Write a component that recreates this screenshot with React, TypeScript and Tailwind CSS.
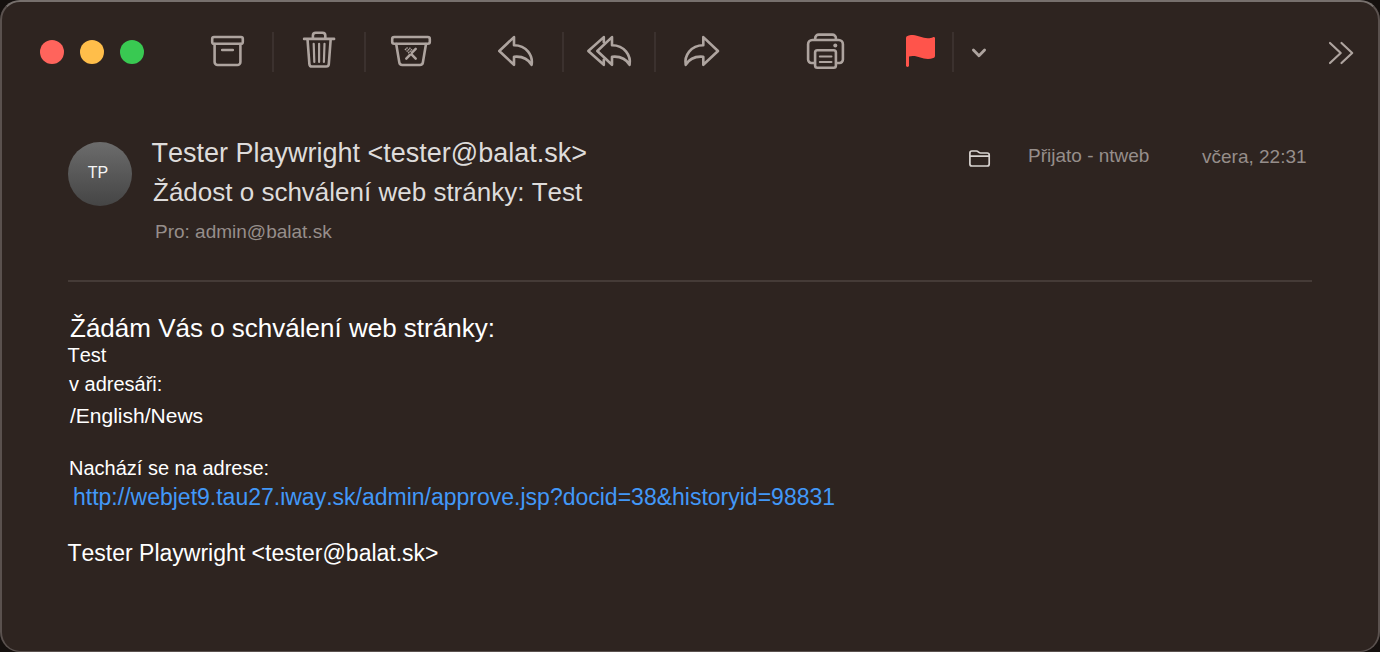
import type { ReactNode } from "react";

type IconProps = { box: string; className: string; children: ReactNode; width?: number };

function Icon({ box, className, children, width = 2.6 }: IconProps) {
  return (
    <svg
      viewBox={box}
      className={`shrink-0 ${className}`}
      fill="none"
      stroke="currentColor"
      strokeWidth={width}
      strokeLinecap="round"
      strokeLinejoin="round"
    >
      {children}
    </svg>
  );
}

function Separator() {
  return <div className="h-10 w-0.5 shrink-0 bg-[#3b312e]" />;
}

function Toolbar() {
  return (
    <header className="flex h-[100px] items-center pl-[38px] text-[#aea49f]">
      <div className="flex gap-4">
        <span className="size-6 rounded-full bg-[#ff645c]" />
        <span className="size-6 rounded-full bg-[#ffbe4a]" />
        <span className="size-6 rounded-full bg-[#39c952]" />
      </div>

      <div className="ml-16 flex items-center">
        <Icon box="208 32 40 40" className="h-10 w-10">
          <rect x="212.2" y="37" width="30.6" height="6.8" rx="1.8" />
          <path d="M214.6 44v18a3 3 0 0 0 3 3h19.8a3 3 0 0 0 3-3V44M222.2 50h10.6" />
        </Icon>
        <div className="ml-6"><Separator /></div>
        <Icon box="299 30 40 40" className="ml-[25px] h-10 w-10 -translate-y-0.5">
          <path d="M304.1 38.9h30M312.9 38.5v-3a2.8 2.8 0 0 1 2.8-2.8h6.8a2.8 2.8 0 0 1 2.8 2.8v3M307.5 39.2l1.9 24.9a2.6 2.6 0 0 0 2.6 2.4h14.2a2.6 2.6 0 0 0 2.6-2.4l1.9-24.9" />
          <path strokeWidth="2.2" d="M313.7 43.8l.6 18.2M319.1 43.8v18.2M324.5 43.8l-.6 18.2" />
        </Icon>
        <div className="ml-[25px]"><Separator /></div>
        <Icon box="388 32 46 40" className="ml-[22px] h-10 w-[46px]">
          <rect x="392.2" y="37" width="37.6" height="6.8" rx="2" />
          <path d="M396.2 44l3.1 18.4a3 3 0 0 0 3 2.6h17.6a3 3 0 0 0 3-2.6L426 44" />
          <path strokeWidth="2.5" d="M415.7 48.9l-3.7 3.8M409.7 55.2l-3.4 3.5M411.8 54.700l3.900 4" />
          <path strokeWidth="1.5" strokeDasharray="1.400 .9" strokeLinecap="butt" d="M405 48.900l6.400 6.400M406.500 47.600l6 6M409.400 47.700l2.600 2.600" />
        </Icon>
      </div>

      <div className="ml-[60px] flex items-center">
        <Icon box="494 32 44 40" className="h-10 w-11">
          <path d="M514 37.1L499.3 51 514 64.8v-8c8-.8 13.6 1.4 17.600 8 1.600-9-5-19.600-17.600-19.600z" />
        </Icon>
        <div className="ml-6"><Separator /></div>
        <Icon box="585 32 48 40" className="ml-[21px] h-10 w-12">
          <path d="M612 37.1L597.3 51 612 64.8v-8c8-.8 13.6 1.4 17.600 8 1.600-9-5-19.600-17.600-19.600z" />
          <path d="M603.8 42.2v-5.1L588.3 51l15.5 13.8v-5.1" />
        </Icon>
        <div className="ml-[21px]"><Separator /></div>
        <Icon box="680 32 44 40" className="ml-6 h-10 w-11">
          <path d="M703.3 37.1L718 51l-14.7 13.8v-8c-8-.8-13.600 1.400-17.600 8-1.600-9 5-19.600 17.600-19.600z" />
        </Icon>
      </div>

      <Icon box="804 30 44 42" className="ml-20 h-[42px] w-11 -translate-y-px">
        <path d="M814.5 63h-3a3.400 3.400 0 0 1-3.400-3.400V44.200a4.200 4.200 0 0 1 4.200-4.200h26.400a4.200 4.200 0 0 1 4.200 4.200v15.400a3.400 3.400 0 0 1-3.400 3.400h-3" />
        <path d="M815.2 39.6v-1.4a3.6 3.6 0 0 1 3.6-3.6h13.5a3.6 3.6 0 0 1 3.6 3.6v1.4" />
        <rect x="815.1" y="50.2" width="20.8" height="17.6" rx="2.2" />
        <path strokeWidth="2" d="M819.8 56.6h11.7M819.8 62h11.7" />
        <circle cx="835.3" cy="45.5" r="2" fill="currentColor" stroke="none" />
      </Icon>

      <div className="ml-[54px] flex items-center">
        <svg viewBox="902 32 38 40" className="h-10 w-[38px] shrink-0 text-[#ff544b]" fill="currentColor">
          <path d="M906 38.2c0-1.2.5-1.9 1.5-2.3 2-.8 3.4-1 5.5-.9 5.500.3 9.500 3.200 14.700 3.200 2.300 0 3.800-.4 5.300-1 1.200-.5 2 .1 2 1.300v17.300c0 1.100-.6 1.900-1.700 2.300-1.700.6-3.400.9-5.400.9-5.700 0-9.500-2.900-15.100-2.900-1.500 0-2.700.2-3.800.5v9c0 .9-.6 1.400-1.500 1.400s-1.500-.5-1.500-1.400z" />
        </svg>
        <div className="ml-3"><Separator /></div>
        <Icon box="969 42 20 20" className="ml-[15px] size-5" width={2.8}>
          <path d="M973.4 50l5.600 5.700 5.600-5.700" />
        </Icon>
      </div>

      <Icon box="1326 40 30 26" className="ml-[337px] h-[26px] w-[30px] translate-y-px" width={2.2}>
        <path d="M1330 43l10.700 10-10.700 10M1341.500 43l10.700 10-10.700 10" />
      </Icon>
    </header>
  );
}

function MessageHeader() {
  return (
    <section className="mx-[66px] flex h-[180px] border-b-2 border-[#453b37] pt-9">
      <div className="mt-1 flex size-16 shrink-0 justify-center rounded-full bg-linear-to-b from-[#6c6c6c] to-[#454545] pt-5 text-[16px] leading-[22px] text-[#f5f5f5]">
        <span className="-ml-1">TP</span>
      </div>
      <div className="ml-5 w-[816px] shrink-0 text-[#dedcdb]">
        <h1 className="-ml-[0.5px] text-[27px] leading-[30px]">Tester Playwright &lt;tester@balat.sk&gt;</h1>
        <h2 className="mt-[9px] pl-px text-[26px] leading-[30px]">Žádost o schválení web stránky: Test</h2>
        <p className="mt-[13px] pl-[3px] text-[19px] leading-6 text-[#968e8b]">Pro: admin@balat.sk</p>
      </div>
      <svg viewBox="968 148 24 22" className="mt-[10px] h-[22px] w-6 shrink-0 text-[#d8d3d0]" fill="none" stroke="currentColor" strokeWidth="1.7" strokeLinejoin="round">
        <path d="M969.9 164V153a2 2 0 0 1 2-2h4.400c.9 0 1.400.3 2 .9l.6.500c.5.400.9.600 1.600.600h6.700a2 2 0 0 1 2 2V164a2 2 0 0 1-2 2h-15.300a2 2 0 0 1-2-2zM970 156.200h19" />
      </svg>
      <div className="ml-9 flex text-[19px] leading-6 text-[#968e8b]">
        <span className="mt-[6px] w-[174px] shrink-0">Přijato - ntweb</span>
        <time className="mt-[7px] whitespace-nowrap">včera, 22:31</time>
      </div>
    </section>
  );
}

function MessageBody() {
  return (
    <article className="flex flex-col items-start pl-[65px] pt-[31px] text-[20px] leading-6 text-white">
      <p className="pl-[3px] text-[26px] leading-[30px]">Žádám Vás o schválení web stránky:</p>
      <p className="pl-[0.5px]">Test</p>
      <p className="mt-[5px] pl-0.5">v adresáři:</p>
      <p className="mt-2 pl-[3px] text-[21px]">/English/News</p>
      <p className="mt-7 pl-0.5">Nachází se na adrese:</p>
      <a className="mt-[3px] pl-1.5 text-[23px] leading-7 text-[#4298f8]" href="#">
        http://webjet9.tau27.iway.sk/admin/approve.jsp?docid=38&amp;historyid=98831
      </a>
      <p className="mt-7 pl-[0.5px] text-[23px] leading-7">Tester Playwright &lt;tester@balat.sk&gt;</p>
    </article>
  );
}

export default function App() {
  return (
    <div className="h-[652px] w-[1380px] overflow-hidden bg-[#15100e] font-['Liberation_Sans',Arial,sans-serif] [font-kerning:none]">
      <main className="h-full w-full overflow-hidden rounded-[20px] border-2 border-b border-[#5a514e] border-t-[#77706d] bg-[#2e2420]">
        <Toolbar />
        <MessageHeader />
        <MessageBody />
      </main>
    </div>
  );
}
